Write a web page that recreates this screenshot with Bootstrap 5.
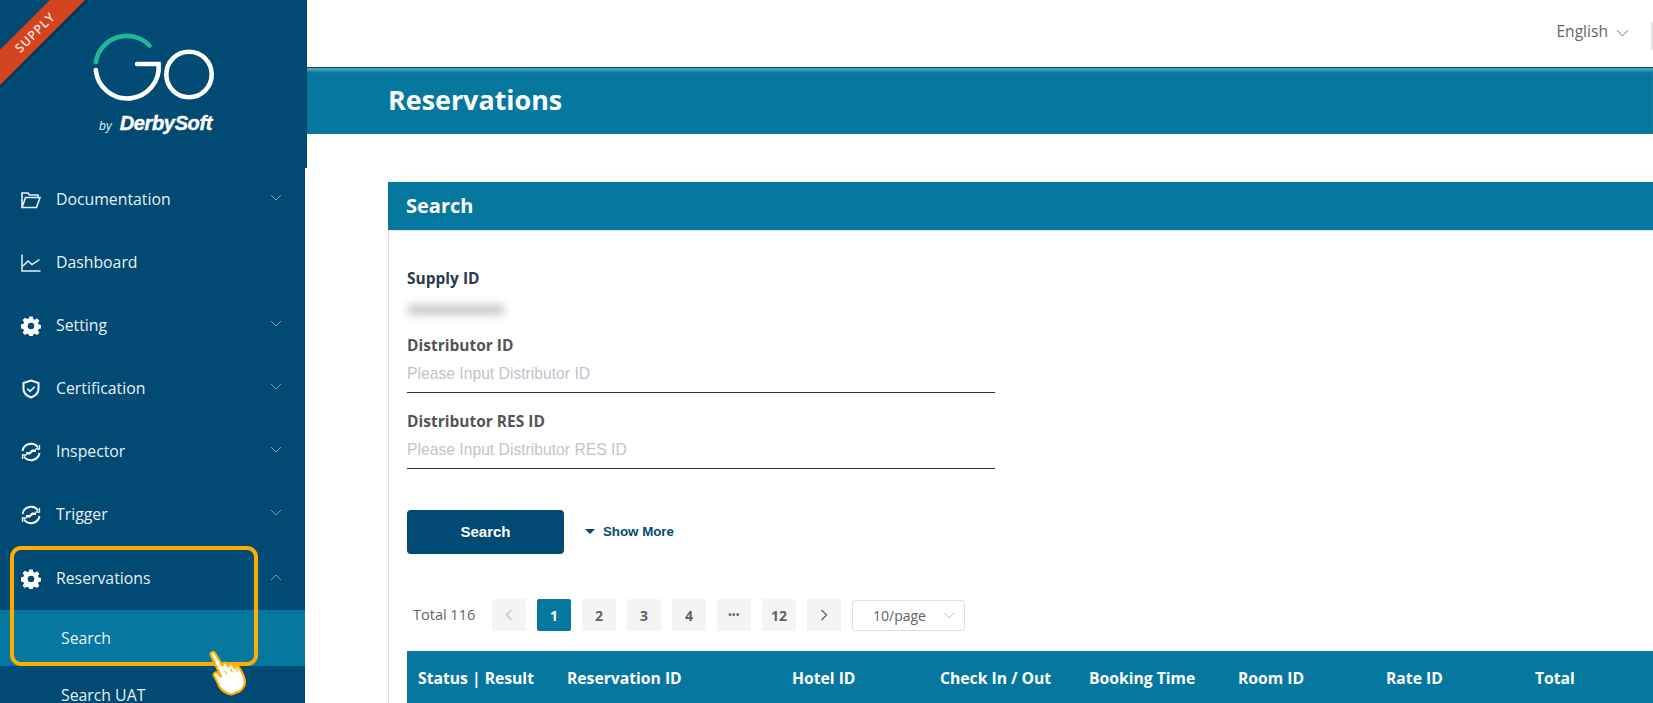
<!DOCTYPE html>
<html lang="en">
<head>
<meta charset="utf-8">
<title>Reservations</title>
<link href="https://cdn.jsdelivr.net/npm/bootstrap@5.3.0/dist/css/bootstrap.min.css" rel="stylesheet">
<style>
html,body{height:703px;overflow:hidden}
body{font-family:"Open Sans","Noto Sans",sans-serif;color:#555;background:#fff}
.shell{height:703px;overflow:hidden}
.side{width:305px;flex:none;background:#004a73;height:703px;position:relative;color:#e6eef3}
.brand{width:307px;height:168px;background:#004a73;position:relative;overflow:hidden;z-index:1}
.ribbon{position:absolute;left:-45px;top:19.500px;width:160px;height:25px;line-height:25px;text-align:center;background:#d2431e;color:#f6e3dc;transform:rotate(-45deg);font-size:12.500px;font-weight:600;letter-spacing:.8px;box-shadow:0 2px 3px rgba(0,0,0,.3)}
.logomark{position:absolute;left:0;top:0}
.byline{position:absolute;left:99px;top:108px;width:125px;height:32px;color:#fff;white-space:nowrap}
.byline i{font-family:"Liberation Sans",sans-serif;font-size:12px;color:#dfe8ee;margin-right:8px}
.byline b{font-family:"Liberation Sans",sans-serif;font-style:italic;font-weight:700;font-size:20px;letter-spacing:-.35px;-webkit-text-stroke:.4px #fff}
.menu-row{height:63px;padding:0 0 0 21px;color:#e8f0f5;font-size:15.800px;text-decoration:none}
.menu-row:hover{color:#e8f0f5}
.menu-row .ico{width:20px;height:20px;flex:none;margin-right:15px}
.menu-row .lab{flex:1}
.chev{width:14px;height:8px;flex:none;margin-right:22px;margin-top:-3px}
.sub-row{height:56px;padding-left:61px;font-size:15.800px;line-height:18px;color:#e8f0f5;text-decoration:none}
.sub-on{background:#06789f}
.menu-pad{height:1px}
.focusbox{position:absolute;left:10px;top:546px;width:248px;height:120px;border:4px solid #fdae00;border-radius:11px;pointer-events:none;z-index:2}
.hand{position:absolute;left:207px;top:650px;z-index:3}
.mainpane{min-width:0;overflow:hidden}
.topbar{height:67px;padding:0 24px 4px 0}
.lang{font-size:15.600px;color:#666}
.lang svg{margin-left:8px;margin-top:3px}
.vsep{position:absolute;right:0;top:22px;height:28px;width:2px;background:#e4e4e4}
.headstrip{height:67px;background:#06789f;border-top:1px solid #0b4d70;box-shadow:inset 0 4px 3px -1px rgba(255,255,255,.3);padding:0 0 1px 83px;color:#fff;font-size:26.900px;font-weight:700}
.content{padding:48px 0 0 83px}
.panel{border-left:1px solid #e2e2e2;width:1300px;min-height:530px}
.panelhead{height:49px;margin-left:-1px;background:#06789f;border-bottom:1px solid #dfe3e6;color:#fff;font-weight:700;font-size:20px;padding-left:18px}
.panelbody{padding:37px 0 0 18px}
.flabel{font-weight:700;font-size:15.500px;line-height:20px;color:#555;margin:0}
.flabel-dark{color:#2a3a4a}
.blurval{height:10px;width:96px;background:#c3c6ca;filter:blur(4px);margin:17px 0 20px 1px;border-radius:3px}
.lineinput{width:588px;border:0;border-bottom:1px solid #333;border-radius:0;padding:1px 0 0;height:38px;font-family:"Liberation Sans",sans-serif;font-size:15.700px;color:#333;background:transparent;box-shadow:none;display:block}
.lineinput::placeholder{color:#c0c4cc;opacity:1}
.lineinput:focus{box-shadow:none;border-color:#333}
.fieldgap{margin-bottom:18px}
.actbtn{width:157px;height:44px;background:#004a73;border:0;border-radius:4px;color:#fff;font-family:"Liberation Sans",sans-serif;font-weight:700;font-size:15px}
.actbtn:hover{background:#004a73;color:#fff}
.more{font-family:"Liberation Sans",sans-serif;font-weight:700;font-size:13.300px;color:#004a73;margin-left:21px;text-decoration:none}
.more span{display:inline-block;width:0;height:0;border-left:5px solid transparent;border-right:5px solid transparent;border-top:5px solid #004a73;margin-right:8px;vertical-align:2px}
.actions{margin-top:41px}
.pager{margin-top:45px;height:32px;padding-left:6px}
.total{font-size:14.500px;color:#666;width:79px;flex:none}
.pgitem{width:34px;height:32px;margin-right:11px;background:#f4f4f5;border-radius:2px;color:#606266;font-size:14px;font-weight:700;font-family:"Open Sans",sans-serif}
.pgdots{font-size:9px;letter-spacing:.5px}
.pgon{background:#06789f;color:#fff}
.sizepick{width:113px;height:31px;border:1px solid #dcdfe6;border-radius:3px;font-size:14px;color:#606266;padding:0 9px 0 20px}
.gridhead{margin:20px 0 0 0;width:1247px;table-layout:fixed;--bs-table-bg:#06789f;--bs-table-color:#fff;border-collapse:collapse}
.gridhead th{height:53px;padding:0 0 0 11px;vertical-align:middle;font-size:15.700px;line-height:18px;font-weight:700;border:0;background:#06789f;color:#fff;white-space:nowrap}
</style>
</head>
<body>
<div class="shell d-flex">
  <aside class="side">
    <div class="brand">
      <div class="ribbon">SUPPLY</div>
      <svg class="logomark" width="240" height="110" viewBox="0 0 240 110" fill="none" stroke-width="4.600" stroke-linecap="round">
        <path d="M95.800 62 A31.500 31.500 0 0 1 149.500 45.500" stroke="#1fb99a"/>
        <path d="M95.800 70 A31.500 31.500 0 0 0 158.600 64 L137 64" stroke="#fff"/>
        <circle cx="189" cy="74.500" r="22.700" stroke="#fff"/>
      </svg>
      <div class="byline"><i>by</i><b>DerbySoft</b></div>
    </div>
    <nav class="nav flex-column flex-nowrap">
      <a class="menu-row d-flex align-items-center" href="#">
        <svg class="ico" viewBox="0 0 20 20" fill="none" stroke="#e8f0f5" stroke-width="1.600"><path d="M1 17.500V3h6l1.500 2H17v2.500M1 17.500h14.500L19 7.500H4.500L1 17.500z"/></svg>
        <span class="lab">Documentation</span>
        <svg class="chev" viewBox="0 0 14 8" fill="none" stroke="#7f9db2" stroke-width="1"><path d="M2 1l5 5 5-5"/></svg>
      </a>
      <a class="menu-row d-flex align-items-center" href="#">
        <svg class="ico" viewBox="0 0 20 20" fill="none" stroke="#e8f0f5" stroke-width="1.500"><path d="M1 1.500V18h18.500M2 13l5-5 4 3.500 7.500-5"/></svg>
        <span class="lab">Dashboard</span>
      </a>
      <a class="menu-row d-flex align-items-center" href="#">
        <svg class="ico" viewBox="0 0 20 20"><use href="#gear"/></svg>
        <span class="lab">Setting</span>
        <svg class="chev" viewBox="0 0 14 8" fill="none" stroke="#7f9db2" stroke-width="1"><path d="M2 1l5 5 5-5"/></svg>
      </a>
      <a class="menu-row d-flex align-items-center" href="#">
        <svg class="ico" viewBox="0 0 20 20" fill="none" stroke="#e8f0f5" stroke-width="2.100"><path d="M10 1.500l7.500 2.600v6c0 4-3.200 6.800-7.500 8.400-4.300-1.600-7.500-4.400-7.500-8.400v-6L10 1.500z"/><path d="M6.300 9.600l2.800 2.800 4.600-4.800" stroke-width="1.600"/></svg>
        <span class="lab">Certification</span>
        <svg class="chev" viewBox="0 0 14 8" fill="none" stroke="#7f9db2" stroke-width="1"><path d="M2 1l5 5 5-5"/></svg>
      </a>
      <a class="menu-row d-flex align-items-center" href="#">
        <svg class="ico" viewBox="0 0 20 20"><use href="#sync"/></svg>
        <span class="lab">Inspector</span>
        <svg class="chev" viewBox="0 0 14 8" fill="none" stroke="#7f9db2" stroke-width="1"><path d="M2 1l5 5 5-5"/></svg>
      </a>
      <a class="menu-row d-flex align-items-center" href="#">
        <svg class="ico" viewBox="0 0 20 20"><use href="#sync"/></svg>
        <span class="lab">Trigger</span>
        <svg class="chev" viewBox="0 0 14 8" fill="none" stroke="#7f9db2" stroke-width="1"><path d="M2 1l5 5 5-5"/></svg>
      </a>
      <div class="menu-pad"></div>
      <a class="menu-row d-flex align-items-center" href="#">
        <svg class="ico" viewBox="0 0 20 20"><use href="#gear"/></svg>
        <span class="lab">Reservations</span>
        <svg class="chev" viewBox="0 0 14 8" fill="none" stroke="#7f9db2" stroke-width="1"><path d="M2 7l5-5 5 5"/></svg>
      </a>
      <a class="sub-row sub-on d-flex align-items-center" href="#">Search</a>
      <a class="sub-row d-flex align-items-start pt-3 mt-1" href="#">Search UAT</a>
    </nav>
    <div class="focusbox"></div>
    <svg class="hand" width="42" height="46" viewBox="0 0 42 46">
      <path d="M4 5.500c-1.600-3 2.400-5 4-2.500l7.500 12.500c-.4-2.500 3-4 4.300-1.800l1.600 2.800c-.2-2.600 3-3.600 4.400-1.600l1.800 3c0-2.400 3-3 4.200-1 3.500 5.500 6.200 11 6.200 15 0 4-2.400 7-5.500 9.500L24.500 44.500C20 44 14 40.500 12 36c-1.500-3.500-3-7-5-10-1.500-2.300 1.500-4.500 3.500-3l3.500 3.500L4 5.500z" fill="#fff" stroke="#fdae00" stroke-width="2.200" stroke-linejoin="round"/>
      <path d="M18 21l1.500 3M23.500 18.500l2 4M29 17.500l2 4" stroke="#fdae00" stroke-width="1.300" fill="none"/>
    </svg>
  </aside>
  <main class="mainpane flex-grow-1">
    <header class="topbar d-flex align-items-center justify-content-end position-relative">
      <div class="lang d-flex align-items-center">English
        <svg width="13" height="8" viewBox="0 0 14 8" fill="none" stroke="#666" stroke-width="1"><path d="M1 1l6 6 6-6"/></svg>
      </div>
      <span class="vsep"></span>
    </header>
    <div class="headstrip d-flex align-items-center">Reservations</div>
    <div class="content">
      <section class="panel">
        <div class="panelhead d-flex align-items-center">Search</div>
        <div class="panelbody">
          <p class="flabel flabel-dark">Supply ID</p>
          <div class="blurval"></div>
          <label class="flabel d-block" for="d1">Distributor ID</label>
          <input id="d1" class="form-control lineinput fieldgap" placeholder="Please Input Distributor ID">
          <label class="flabel d-block" for="d2">Distributor RES ID</label>
          <input id="d2" class="form-control lineinput" placeholder="Please Input Distributor RES ID">
          <div class="actions d-flex align-items-center">
            <button class="btn actbtn" type="button">Search</button>
            <a class="more" href="#"><span></span>Show More</a>
          </div>
          <div class="pager d-flex align-items-center">
            <span class="total">Total 116</span>
            <span class="pgitem d-flex align-items-center justify-content-center"><svg width="8" height="12" viewBox="0 0 8 12" fill="none" stroke="#c0c4cc" stroke-width="1.300"><path d="M6.500 1L1.500 6l5 5"/></svg></span>
            <span class="pgitem pgon d-flex align-items-center justify-content-center">1</span>
            <span class="pgitem d-flex align-items-center justify-content-center">2</span>
            <span class="pgitem d-flex align-items-center justify-content-center">3</span>
            <span class="pgitem d-flex align-items-center justify-content-center">4</span>
            <span class="pgitem pgdots d-flex align-items-center justify-content-center">&#8226;&#8226;&#8226;</span>
            <span class="pgitem d-flex align-items-center justify-content-center">12</span>
            <span class="pgitem d-flex align-items-center justify-content-center"><svg width="8" height="12" viewBox="0 0 8 12" fill="none" stroke="#606266" stroke-width="1.300"><path d="M1.500 1l5 5-5 5"/></svg></span>
            <span class="sizepick d-flex align-items-center justify-content-between">10/page<svg width="12" height="7" viewBox="0 0 12 7" fill="none" stroke="#c0c4cc" stroke-width="1"><path d="M1 1l5 5 5-5"/></svg></span>
          </div>
          <table class="table gridhead">
            <colgroup><col style="width:149px"><col style="width:225px"><col style="width:148px"><col style="width:149px"><col style="width:149px"><col style="width:148px"><col style="width:149px"><col style="width:130px"></colgroup>
            <thead><tr><th>Status | Result</th><th>Reservation ID</th><th>Hotel ID</th><th>Check In / Out</th><th>Booking Time</th><th>Room ID</th><th>Rate ID</th><th>Total</th></tr></thead>
          </table>
        </div>
      </section>
    </div>
  </main>
</div>
<svg width="0" height="0" class="d-none">
  <defs>
    <g id="gear"><path fill="#fff" fill-rule="evenodd" d="M8.300 0.500h3.400l.5 2.500 1.700.7 2.100-1.400 2.400 2.400-1.400 2.100.7 1.700 2.500.5v3.400l-2.500.5-.7 1.700 1.400 2.100-2.400 2.400-2.100-1.400-1.700.7-.5 2.500H8.300l-.5-2.500-1.700-.7-2.100 1.400-2.400-2.400 1.400-2.100-.7-1.700-2.500-.5V8.400l2.500-.5.7-1.700L1.600 4.100 4 1.700l2.100 1.400 1.700-.7zM10 6.700a3.300 3.300 0 1 0 0 6.600 3.300 3.300 0 0 0 0-6.600z"/></g>
    <g id="sync" fill="none" stroke="#fff"><path d="M1.500 9A8.600 8.600 0 0 1 17 5.500M18.500 11A8.600 8.600 0 0 1 3 14.500" stroke-width="2"/><path d="M5 11.300h3.500l3-2.600H15" stroke-width="2.400"/><path d="M18.500 3v4h-4M1.500 17v-4h4" stroke-width="1.300"/></g>
  </defs>
</svg>
<script src="https://cdn.jsdelivr.net/npm/bootstrap@5.3.0/dist/js/bootstrap.bundle.min.js"></script>
</body>
</html>
